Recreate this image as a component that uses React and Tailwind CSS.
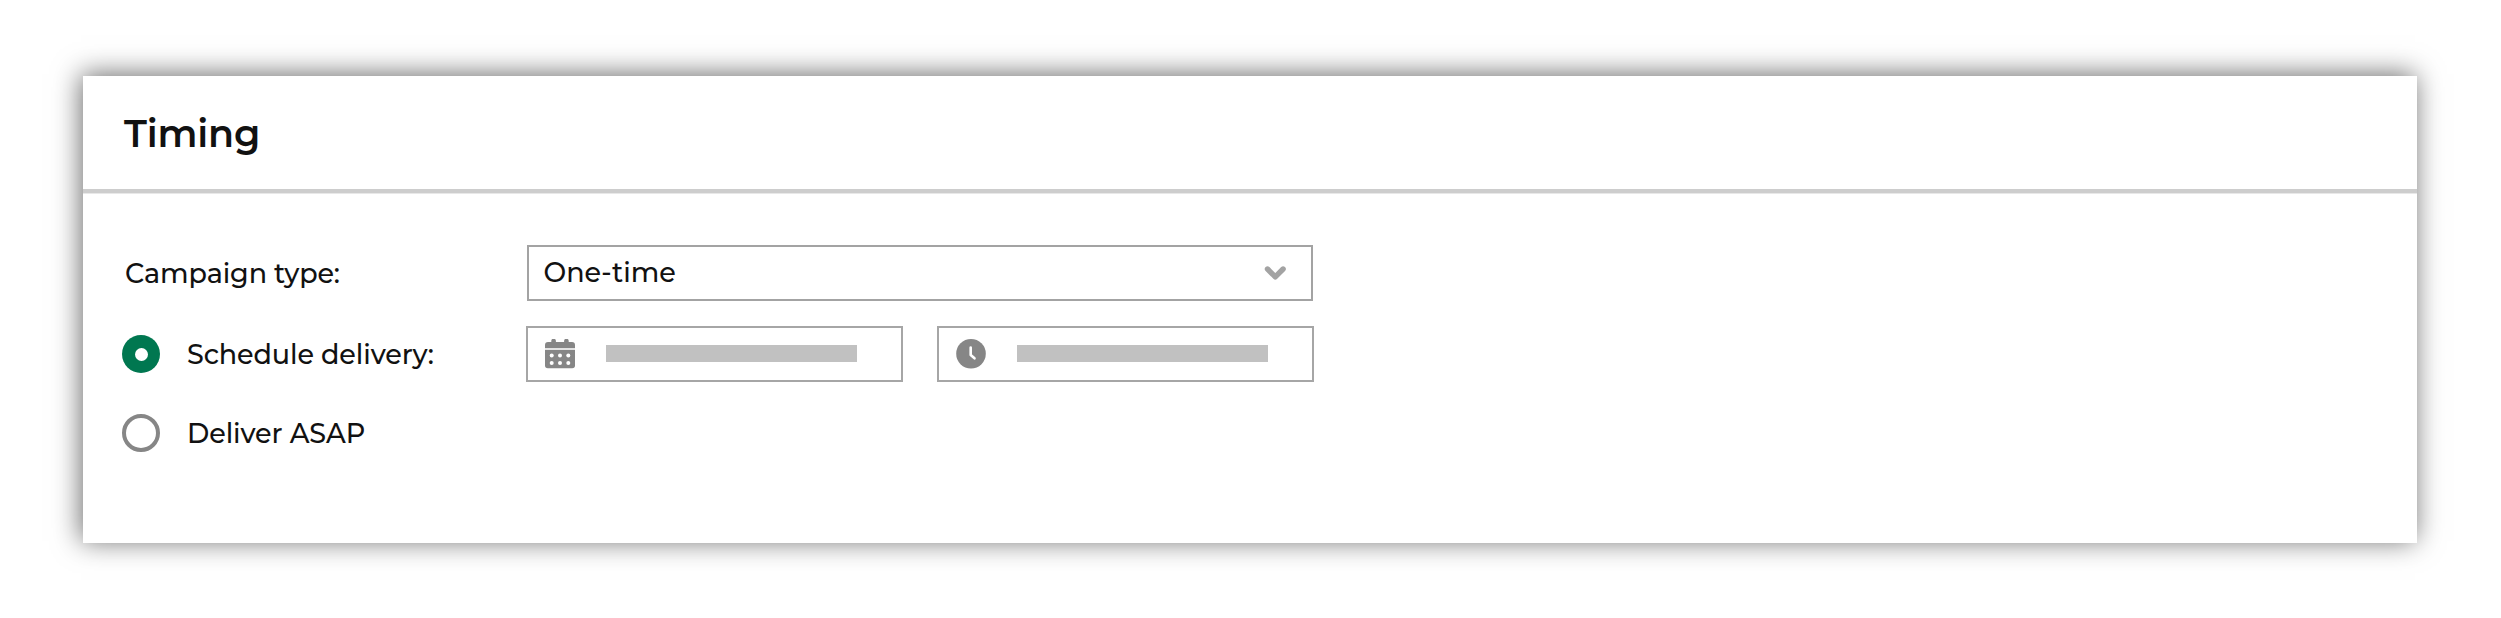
import React from "react";

function CalendarIcon() {
  return (
    <svg className="block h-[30px] w-[30px]" viewBox="0 0 30 30">
      <path fill="#868686" d="M6.3 3V2a2 2 0 0 1 4.600 0v1h8.200V2a2 2 0 0 1 4.600 0v1H27a3 3 0 0 1 3 3v3H0V6a3 3 0 0 1 3-3z" />
      <path fill="#868686" d="M0 11h30v15.500a2.800 2.800 0 0 1-2.800 2.800H2.800A2.800 2.800 0 0 1 0 26.500z" />
      <path fill="#e3e3e3" d="M0 9h30v2H0z" />
      <g fill="#fff">
        <circle cx="6.700" cy="16.600" r="2" />
        <circle cx="15" cy="16.600" r="2" />
        <circle cx="23.300" cy="16.600" r="2" />
        <circle cx="6.700" cy="23.900" r="2" />
        <circle cx="15" cy="23.900" r="2" />
        <circle cx="23.300" cy="23.900" r="2" />
      </g>
    </svg>
  );
}

function ClockIcon() {
  return (
    <svg className="block h-[30px] w-[30px]" viewBox="0 0 30 30">
      <circle cx="15" cy="14.800" r="14.800" fill="#868686" />
      <path d="M14.700 8.500V16l3.800 3.300" fill="none" stroke="#fff" strokeWidth="2.600" strokeLinecap="round" strokeLinejoin="round" />
    </svg>
  );
}

function Chevron() {
  return (
    <svg className="block h-[14px] w-[22px]" viewBox="0 0 22 14">
      <path d="M3.500 3l7.800 7.900L19.100 3" fill="none" stroke="#a3a3a3" strokeWidth="5.400" strokeLinecap="round" strokeLinejoin="round" />
    </svg>
  );
}

function Field({ icon }) {
  return (
    <div className="flex h-14 w-[377px] items-center border-2 border-[#a6a6a6] pl-[17px]">
      {icon}
      <div className="mb-px ml-[31px] h-[17px] w-[251px] bg-[#c1c1c1]" />
    </div>
  );
}

export default function App() {
  return (
    <div className="h-[618px] w-[2501px] overflow-hidden bg-white pl-[83px] pt-[76px] font-['Montserrat','Inter',sans-serif] text-[27px] font-medium leading-8 tracking-[-0.1px] text-[#111111]">
      <main className="h-[466.5px] w-[2334px] bg-white shadow-[-2px_-2px_26px_rgba(0,0,0,0.58)]">
        <header className="flex h-[117px] items-center border-b-4 border-[#cdcdcd] pl-[41px] shadow-[0_1px_0_#e8e8e8]">
          <h1 className="mt-0.5 text-[38px] leading-[44px] font-semibold tracking-[-0.2px]">Timing</h1>
        </header>
        <div className="flex flex-col pt-[52px]">
          <div className="flex h-14 items-center pl-[42px]">
            <div className="mt-0.5 w-[402px]">
              <span className="whitespace-nowrap">Campaign type:</span>
            </div>
            <div className="flex h-14 w-[786px] items-center justify-between border-2 border-[#a3a3a3] pr-[25px] pl-[14.5px]">
              <span className="whitespace-nowrap tracking-normal">One-time</span>
              <Chevron />
            </div>
          </div>
          <div className="mt-[25px] flex h-14 items-center pl-[39px]">
            <div className="flex size-[38px] items-center justify-center rounded-full bg-[#007750]">
              <div className="size-[13px] rounded-full bg-white" />
            </div>
            <div className="mt-0.5 ml-[27px] w-[339px]">
              <span className="whitespace-nowrap">Schedule delivery:</span>
            </div>
            <div className="flex gap-[34px]">
              <Field icon={<CalendarIcon />} />
              <Field icon={<ClockIcon />} />
            </div>
          </div>
          <div className="mt-[23px] flex h-14 items-center pl-[39px]">
            <div className="size-[38px] rounded-full border-[4.5px] border-[#868686]" />
            <span className="mt-0.5 ml-[27px] whitespace-nowrap">Deliver ASAP</span>
          </div>
        </div>
      </main>
    </div>
  );
}
